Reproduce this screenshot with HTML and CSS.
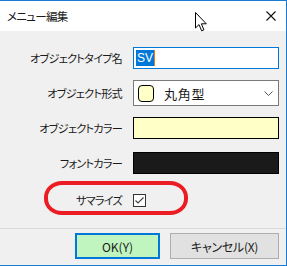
FILE: index.html
```html
<!DOCTYPE html>
<html lang="ja">
<head>
  <meta charset="UTF-8" />
  <title>メニュー編集</title>
  <link rel="stylesheet" href="styles.css">
</head>
<body>
  <div class="window">
    <div class="titlebar">
      <span class="title">メニュー編集</span>
      <svg class="close" width="10" height="10" viewBox="0 0 10 10">
        <path d="M0.5 0.5 L9.5 9.5 M9.5 0.5 L0.5 9.5" stroke="#111" stroke-width="1.1" fill="none"/>
      </svg>
    </div>

    <div class="content">
      <div class="form">
        <div class="row row-name">
          <label>オブジェクトタイプ名</label>
          <div class="textbox"><span class="sel">SV</span><span class="caret"></span></div>
        </div>
        <div class="row row-shape">
          <label>オブジェクト形式</label>
          <div class="combo">
            <span class="swatch"></span>
            <span class="combo-text">丸角型</span>
            <svg class="chevron" width="9" height="5" viewBox="0 0 9 5">
              <path d="M0.5 0.5 L4.5 4.5 L8.5 0.5" stroke="#555" stroke-width="1" fill="none"/>
            </svg>
          </div>
        </div>
        <div class="row row-color">
          <label>オブジェクトカラー</label>
          <div class="colorbox light"></div>
        </div>
        <div class="row row-font">
          <label>フォントカラー</label>
          <div class="colorbox dark"></div>
        </div>
        <div class="row row-summary">
          <label>サマライズ</label>
          <div class="check">
            <svg width="13" height="13" viewBox="0 0 13 13">
              <rect x="0.5" y="0.5" width="12" height="12" fill="#fff" stroke="#333"/>
              <path d="M2.5 6.5 L5 9 L10.5 3.5" stroke="#444" stroke-width="1.2" fill="none"/>
            </svg>
          </div>
        </div>
      </div>

      <div class="footer">
        <button class="btn ok">OK(Y)</button>
        <button class="btn cancel">キャンセル(X)</button>
      </div>

      <!-- 注釈の赤枠 -->
      <div class="mark"></div>
    </div>

    <svg class="cursor" width="13" height="20" viewBox="0 0 13 20">
      <path d="M0.5 0.5 L0.5 16 L4 12.6 L6.6 18.8 L8.9 17.8 L6.4 11.8 L11.3 11.8 Z" fill="#fff" stroke="#000" stroke-width="1" stroke-linejoin="round"/>
    </svg>
  </div>
</body>
</html>
```

FILE: styles.css
```css
:root {
  --blue: #1a7bd4;
  --face: #f0f0f0;
  --text: #1a1a1a;
}
* { box-sizing: border-box; }
body {
  margin: 0;
  font-family: "Noto Sans CJK JP", "Noto Sans", sans-serif;
  font-size: 12px;
  font-feature-settings: "palt";
  color: var(--text);
  background: #fff;
}
.window {
  position: relative;
  width: 287px;
  height: 266px;
  border-top: 1px solid var(--blue);
  border-right: 1px solid var(--blue);
  border-bottom: 1px solid var(--blue);
  display: flex;
  flex-direction: column;
  overflow: hidden;
}
.titlebar {
  height: 30px;
  flex: none;
  background: #fff;
  display: flex;
  align-items: center;
  justify-content: space-between;
  padding: 0 10px 0 7px;
}
.title {
  font-size: 11.5px;
  letter-spacing: -0.7px;
}
.content {
  position: relative;
  flex: 1;
  background: var(--face);
  display: flex;
  flex-direction: column;
}
.form {
  padding: 16px 7px 0 0;
  flex: 1;
}
.row {
  display: grid;
  grid-template-columns: 122px 146px;
  column-gap: 11px;
  align-items: center;
}
.row label {
  text-align: right;
  font-size: 11.2px;
  letter-spacing: -0.8px;
}
.row-shape { margin-top: 11px; }
.row-color { margin-top: 11px; }
.row-font { margin-top: 13px; }
.row-summary { margin-top: 18px; }

.textbox {
  height: 22px;
  border: 1px solid #0078d7;
  background: #fff;
  display: flex;
  align-items: center;
  padding-left: 2px;
}
.sel {
  background: #0078d7;
  color: #fff;
  height: 16px;
  line-height: 16px;
  padding: 0 1px;
  font-family: "Liberation Sans", sans-serif;
  font-size: 12px;
}
.caret {
  width: 1px;
  height: 16px;
  background: #e87a1c;
}
.combo {
  height: 26px;
  border: 1px solid #7a7a7a;
  background: #fff;
  display: flex;
  align-items: center;
  padding: 0 5px 0 4px;
}
.swatch {
  width: 16px;
  height: 17px;
  border: 1px solid #000;
  border-radius: 4px;
  background: #ffffc8;
}
.combo-text {
  margin-left: 10px;
  font-size: 13px;
  letter-spacing: 0.8px;
  flex: 1;
}
.colorbox {
  height: 22px;
  border: 1px solid #000;
}
.colorbox.light { background: #ffffc8; }
.colorbox.dark { background: #1a1a1a; }
.check {
  height: 13px;
  display: flex;
}
.check svg { display: block; }

.footer {
  border-top: 1px solid #dadada;
  display: flex;
  justify-content: flex-end;
  gap: 10px;
  padding: 4px 7px 6px 0;
}
.btn {
  height: 26px;
  font-family: "Noto Sans CJK JP", "Liberation Sans", sans-serif;
  font-feature-settings: "palt";
  font-size: 12px;
  color: var(--text);
  padding: 0;
}
.btn.ok {
  width: 85px;
  background: #c0f5c0;
  border: 2px solid #0078d7;
}
.btn.cancel {
  width: 109px;
  background: #e1e1e1;
  border: 1px solid #adadad;
  letter-spacing: -0.3px;
}
.mark {
  position: absolute;
  left: 44px;
  top: 150px;
  width: 144px;
  height: 34px;
  border: 4px solid #ec1c24;
  border-radius: 18px / 16px;
}
.cursor {
  position: absolute;
  left: 195px;
  top: 11px;
}
```
